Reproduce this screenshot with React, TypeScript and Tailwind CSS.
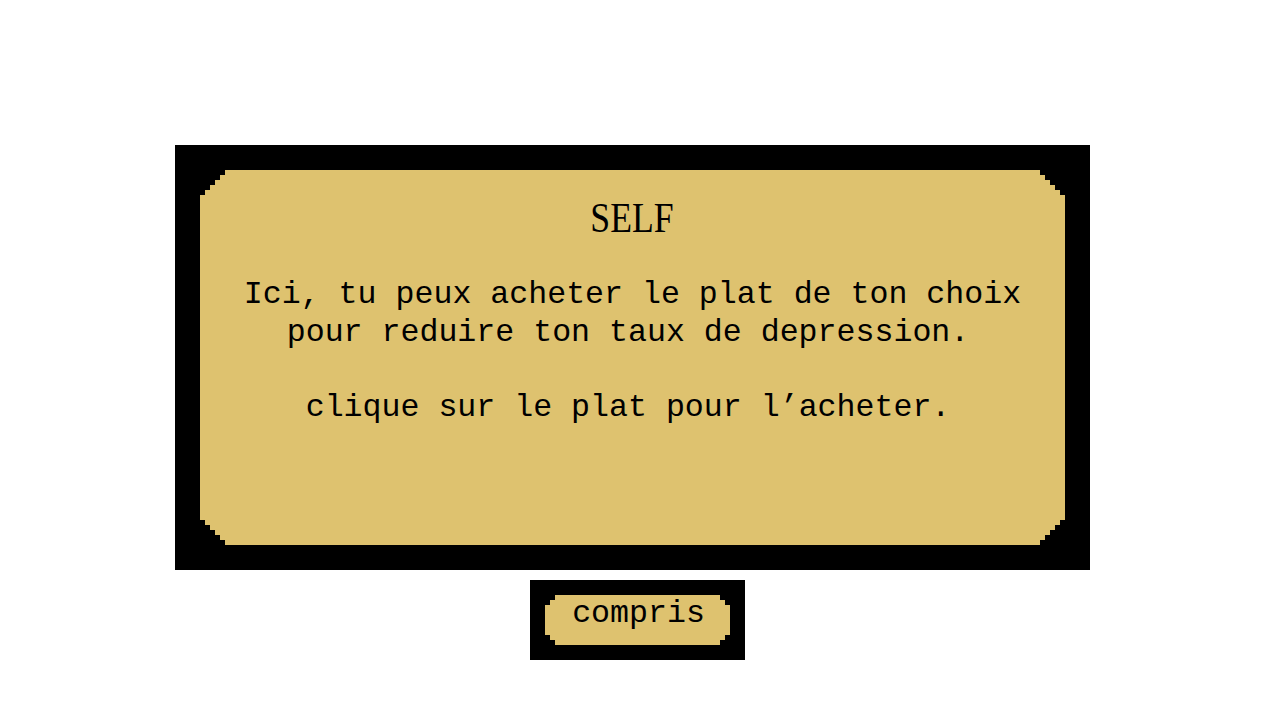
export default function App() {
    const mono = { fontFamily: '"Liberation Mono", "DejaVu Sans Mono", monospace' };

    return (
        <div className="min-h-screen bg-white pt-[145px] pl-[175px] text-black">
            {/* Info panel */}
            <div className="w-[915px] h-[425px] bg-black p-[25px]">
                <div className="h-full bg-[#dec26f] flex flex-col items-center pt-[27px] [clip-path:polygon(25px_0,840px_0,840px_5px,845px_5px,845px_10px,850px_10px,850px_15px,855px_15px,855px_20px,860px_20px,860px_25px,865px_25px,865px_350px,860px_350px,860px_355px,855px_355px,855px_360px,850px_360px,850px_365px,845px_365px,845px_370px,840px_370px,840px_375px,25px_375px,25px_370px,20px_370px,20px_365px,15px_365px,15px_360px,10px_360px,10px_355px,5px_355px,5px_350px,0_350px,0_25px,5px_25px,5px_20px,10px_20px,10px_15px,15px_15px,15px_10px,20px_10px,20px_5px,25px_5px)]">
                    <h1 className="text-[42px] leading-[42px] scale-x-[0.85] font-['Liberation_Serif',serif]">SELF</h1>
                    <div className="mt-[37px] text-center text-[31.6px] leading-[37.5px] whitespace-pre" style={mono}>
                        <div>Ici, tu peux acheter le plat de ton choix</div>
                        <div className="pr-[9px]">pour reduire ton taux de depression.</div>
                        <div>{'\u00a0'}</div>
                        <div className="pr-[9px]">clique sur le plat pour l’acheter.</div>
                    </div>
                </div>
            </div>

            {/* Confirm button */}
            <div className="mt-[10px] ml-[355px] w-[215px] h-[80px] bg-black p-[15px]">
                <button className="w-full h-full bg-[#dec26f] flex justify-center items-start cursor-pointer [clip-path:polygon(10px_0,175px_0,175px_5px,180px_5px,180px_10px,185px_10px,185px_40px,180px_40px,180px_45px,175px_45px,175px_50px,10px_50px,10px_45px,5px_45px,5px_40px,0_40px,0_10px,5px_10px,5px_5px,10px_5px)]">
                    <span className="text-[31.6px] leading-[37.5px] pl-[2px]" style={mono}>compris</span>
                </button>
            </div>
        </div>
    );
}
